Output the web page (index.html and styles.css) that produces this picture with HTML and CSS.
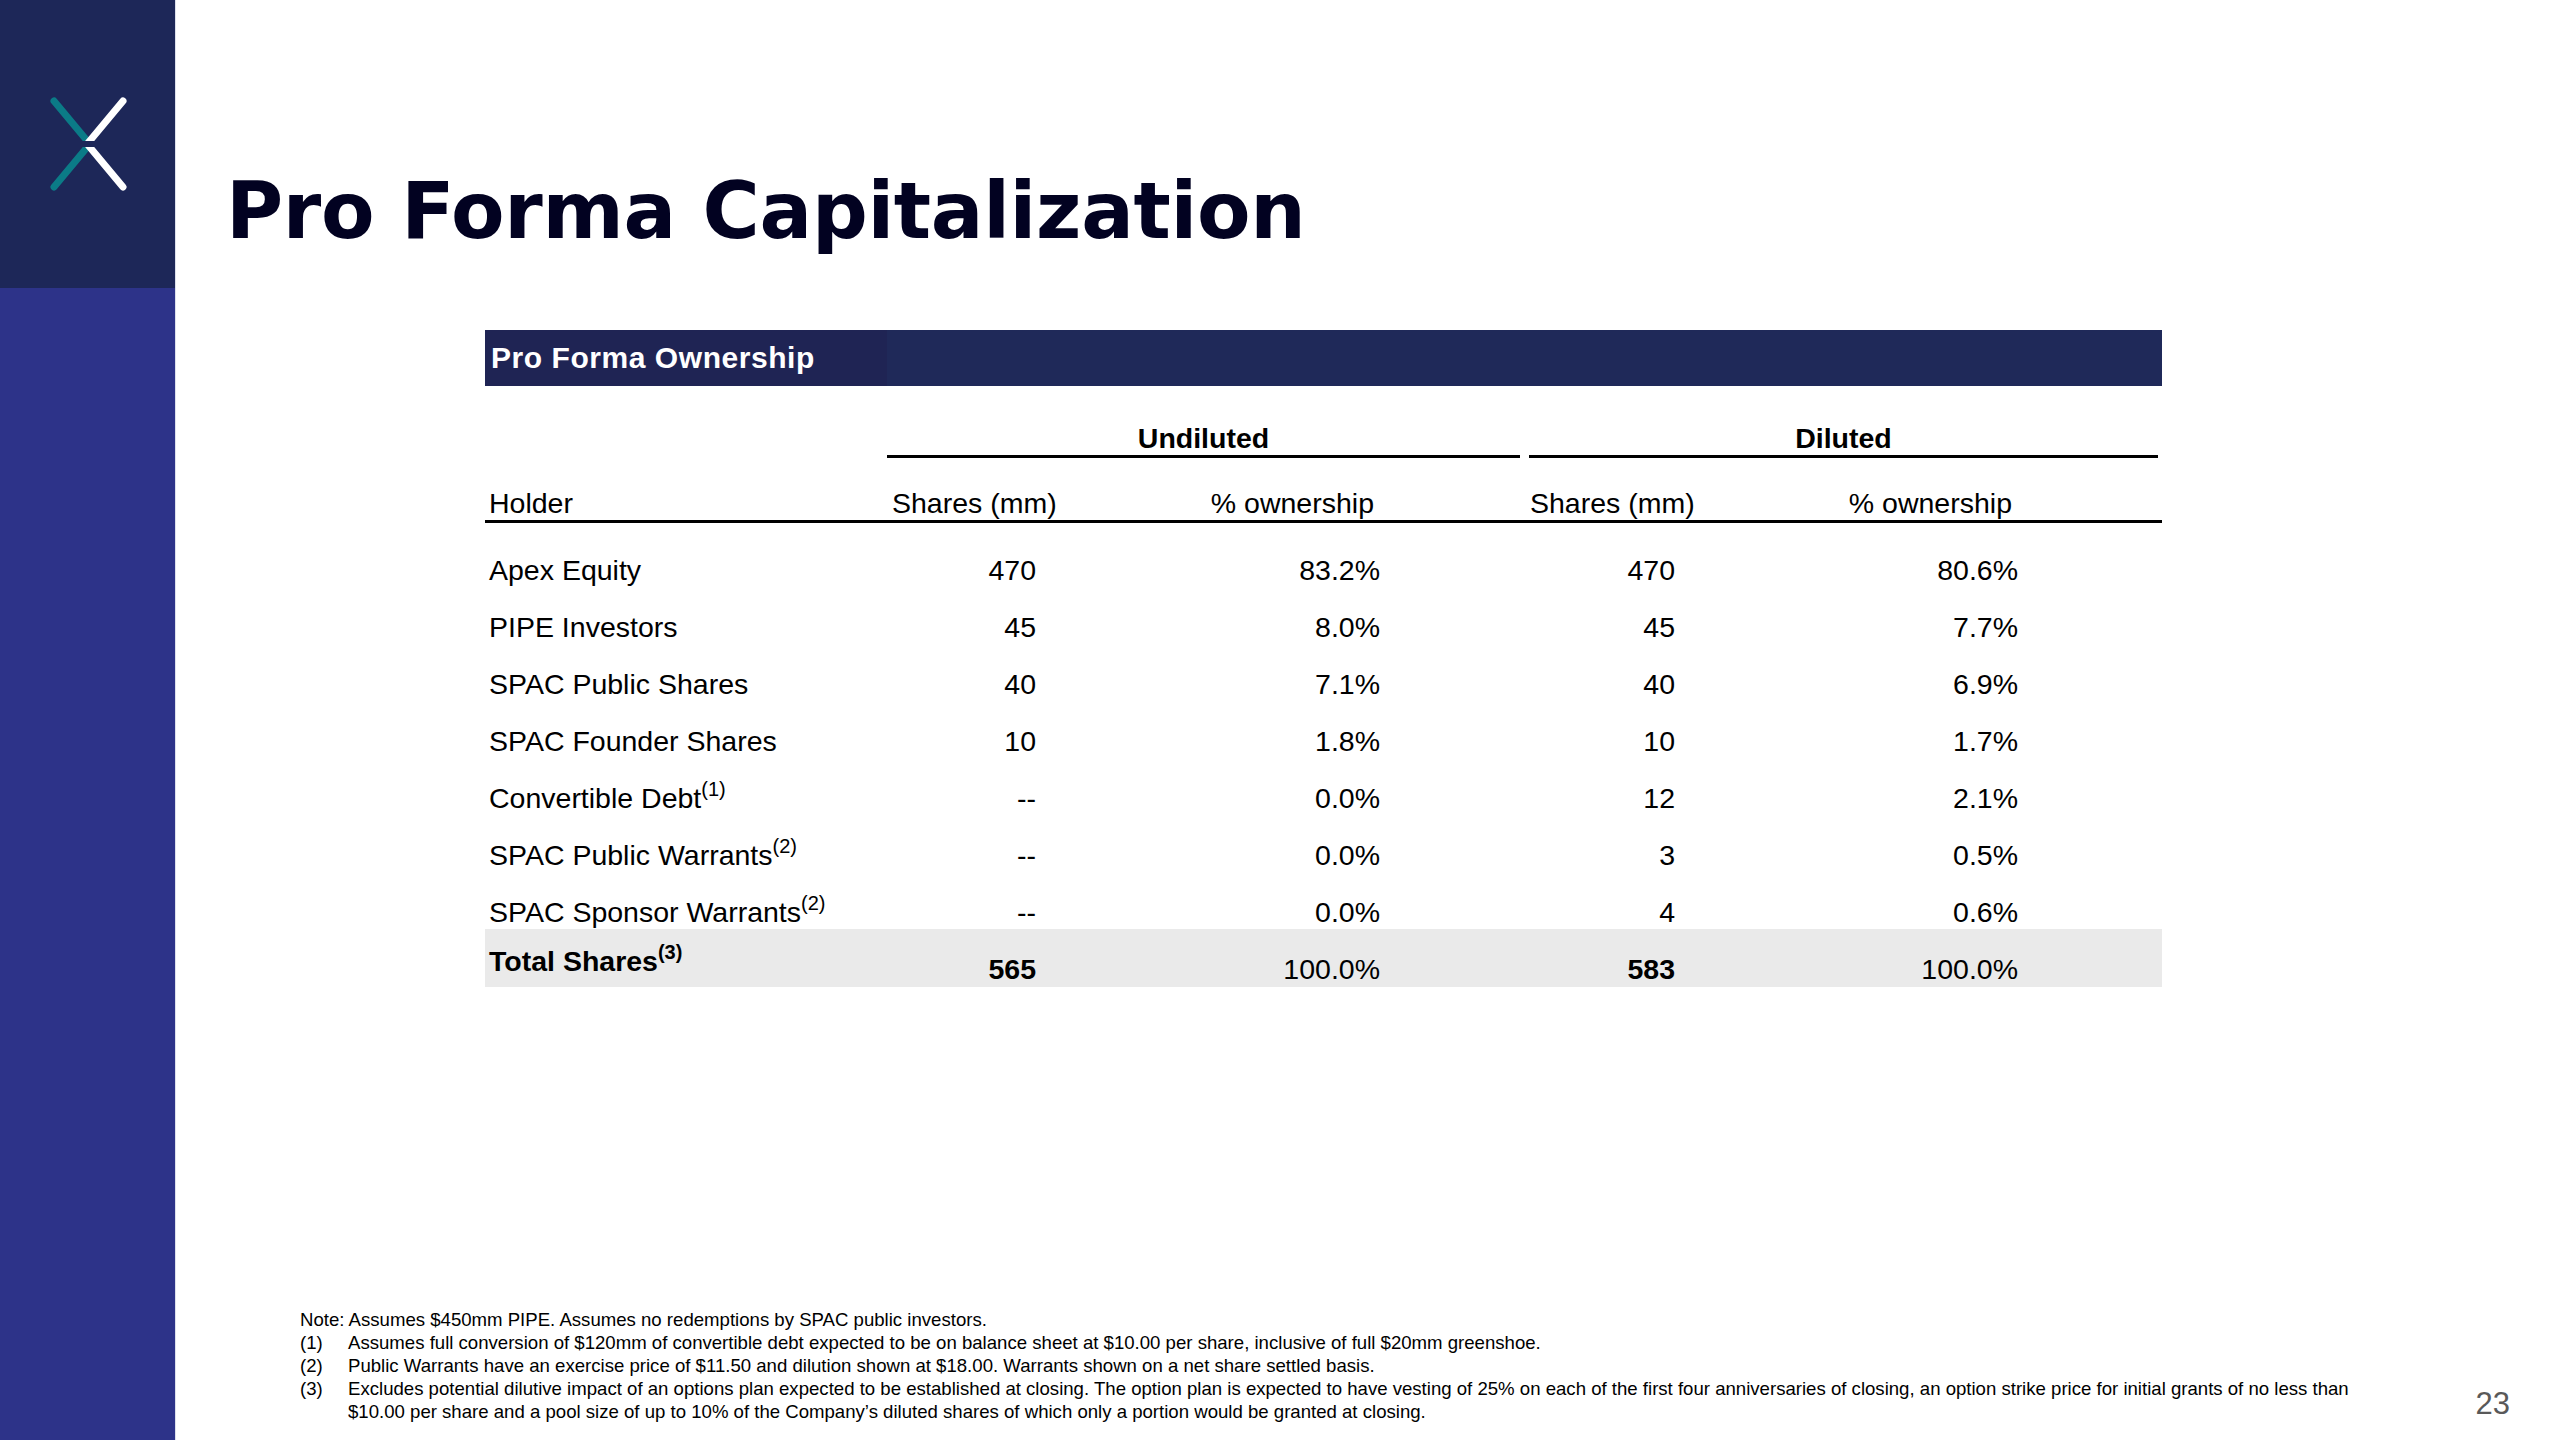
FILE: index.html
```html
<!DOCTYPE html>
<html lang="en">
<head>
<meta charset="utf-8">
<title>Pro Forma Capitalization</title>
<link rel="stylesheet" href="styles.css">
</head>
<body>
<div class="slide">
  <aside class="sidebar">
    <div class="side-top">
      <svg class="logo" viewBox="0 0 175 288" aria-hidden="true">
        <defs>
          <clipPath id="clipUp"><rect x="0" y="0" width="175" height="141"/></clipPath>
          <clipPath id="clipLo"><rect x="0" y="147" width="175" height="141"/></clipPath>
        </defs>
        <g clip-path="url(#clipUp)" stroke-width="7" stroke-linecap="round">
          <line x1="54" y1="101" x2="94" y2="149" stroke="#0b7b87"/>
          <line x1="123" y1="101" x2="83" y2="149" stroke="#ffffff"/>
        </g>
        <g clip-path="url(#clipLo)" stroke-width="7" stroke-linecap="round">
          <line x1="54" y1="187" x2="94" y2="139" stroke="#0b7b87"/>
          <line x1="123" y1="187" x2="83" y2="139" stroke="#ffffff"/>
        </g>
      </svg>
    </div>
    <div class="side-bottom"></div>
  </aside>

  <main class="main">
    <h1 class="title">Pro Forma Capitalization</h1>

    <section class="ownership">
      <div class="bar">Pro Forma Ownership</div>

      <div class="group">
        <div></div>
        <div class="grp">Undiluted</div>
        <div></div>
        <div class="grp grp-d">Diluted</div>
      </div>

      <div class="row head">
        <div class="h-holder">Holder</div>
        <div class="h-shares">Shares (mm)</div>
        <div class="h-pct">% ownership</div>
        <div></div>
        <div class="h-shares-d">Shares (mm)</div>
        <div class="h-pct-d">% ownership</div>
      </div>

      <div class="rows">
        <div class="row data">
          <div class="c-holder">Apex Equity</div>
          <div class="c-us">470</div>
          <div class="c-up">83.2%</div>
          <div></div>
          <div class="c-ds">470</div>
          <div class="c-dp">80.6%</div>
        </div>
        <div class="row data">
          <div class="c-holder">PIPE Investors</div>
          <div class="c-us">45</div>
          <div class="c-up">8.0%</div>
          <div></div>
          <div class="c-ds">45</div>
          <div class="c-dp">7.7%</div>
        </div>
        <div class="row data">
          <div class="c-holder">SPAC Public Shares</div>
          <div class="c-us">40</div>
          <div class="c-up">7.1%</div>
          <div></div>
          <div class="c-ds">40</div>
          <div class="c-dp">6.9%</div>
        </div>
        <div class="row data">
          <div class="c-holder">SPAC Founder Shares</div>
          <div class="c-us">10</div>
          <div class="c-up">1.8%</div>
          <div></div>
          <div class="c-ds">10</div>
          <div class="c-dp">1.7%</div>
        </div>
        <div class="row data">
          <div class="c-holder">Convertible Debt<sup>(1)</sup></div>
          <div class="c-us">--</div>
          <div class="c-up">0.0%</div>
          <div></div>
          <div class="c-ds">12</div>
          <div class="c-dp">2.1%</div>
        </div>
        <div class="row data">
          <div class="c-holder">SPAC Public Warrants<sup>(2)</sup></div>
          <div class="c-us">--</div>
          <div class="c-up">0.0%</div>
          <div></div>
          <div class="c-ds">3</div>
          <div class="c-dp">0.5%</div>
        </div>
        <div class="row data">
          <div class="c-holder">SPAC Sponsor Warrants<sup>(2)</sup></div>
          <div class="c-us">--</div>
          <div class="c-up">0.0%</div>
          <div></div>
          <div class="c-ds">4</div>
          <div class="c-dp">0.6%</div>
        </div>
        <div class="row data total">
          <div class="c-holder t-label">Total Shares<sup>(3)</sup></div>
          <div class="c-us t-bold">565</div>
          <div class="c-up">100.0%</div>
          <div></div>
          <div class="c-ds t-bold">583</div>
          <div class="c-dp">100.0%</div>
        </div>
      </div>
    </section>

    <footer class="foot">
      <div class="notes">
        <div class="note">Note: Assumes $450mm PIPE. Assumes no redemptions by SPAC public investors.</div>
        <div class="note-item"><span>(1)</span><span>Assumes full conversion of $120mm of convertible debt expected to be on balance sheet at $10.00 per share, inclusive of full $20mm greenshoe.</span></div>
        <div class="note-item"><span>(2)</span><span>Public Warrants have an exercise price of $11.50 and dilution shown at $18.00. Warrants shown on a net share settled basis.</span></div>
        <div class="note-item"><span>(3)</span><span>Excludes potential dilutive impact of an options plan expected to be established at closing. The option plan is expected to have vesting of 25% on each of the first four anniversaries of closing, an option strike price for initial grants of no less than<br>$10.00 per share and a pool size of up to 10% of the Company’s diluted shares of which only a portion would be granted at closing.</span></div>
      </div>
      <div class="page">23</div>
    </footer>
  </main>
</div>
</body>
</html>
```

FILE: styles.css
```css
html, body {
  margin: 0;
  padding: 0;
  background: #ffffff;
}

.slide {
  width: 2560px;
  height: 1440px;
  display: flex;
  overflow: hidden;
  background: #ffffff;
  font-family: "Liberation Sans", Arial, sans-serif;
  color: #000000;
}

/* ---------- sidebar ---------- */
.sidebar {
  width: 175px;
  flex: none;
  display: flex;
  flex-direction: column;
  border-right: 1px solid #dde0ec;
}

.side-top {
  height: 288px;
  background: #1d2758;
}

.side-bottom {
  flex: 1;
  background: #2d3389;
}

.logo {
  display: block;
  width: 175px;
  height: 288px;
}

/* ---------- main ---------- */
.main {
  flex: 1;
  display: flex;
  flex-direction: column;
  padding-top: 166px;
}

.title {
  margin: 0 0 0 50px;
  font-family: "DejaVu Sans", "Liberation Sans", sans-serif;
  font-weight: bold;
  font-size: 78px;
  line-height: 90px;
  letter-spacing: -0.3px;
  color: #020221;
}

/* ---------- table ---------- */
.ownership {
  margin: 74px 0 0 309px;
  width: 1677px;
  font-size: 28.5px;
}

.bar {
  height: 56px;
  line-height: 56px;
  padding-left: 6px;
  font-size: 30px;
  font-weight: bold;
  letter-spacing: 0.55px;
  color: #ffffff;
  background: linear-gradient(to right, #1f2454 0, #1f2454 24%, #1f2959 24%, #1f2959 100%);
}

.group {
  display: grid;
  grid-template-columns: 402px 633px 9px 629px;
}

.grp {
  font-weight: bold;
  text-align: center;
  padding-top: 36px;
  line-height: 33px;
  border-bottom: 3px solid #000000;
}

.row {
  display: grid;
  grid-template-columns: 402px 213px 420px 9px 211px 422px;
}

.head {
  border-bottom: 3px solid #000000;
}

.head > div {
  padding-top: 29px;
  line-height: 33px;
  white-space: nowrap;
}

.h-holder { padding-left: 4px; }
.h-shares { padding-left: 5px; }
.h-pct { text-align: right; padding-right: 146px; }
.h-shares-d { padding-left: 1px; }
.h-pct-d { text-align: right; padding-right: 150px; }

.rows {
  margin-top: 7px;
}

.data {
  height: 57px;
}

.data > div {
  padding-top: 23px;
  line-height: 34px;
  white-space: nowrap;
}

.c-holder { padding-left: 4px; }
.c-us { text-align: right; padding-right: 64px; }
.c-up { text-align: right; padding-right: 140px; }
.c-ds { text-align: right; padding-right: 65px; }
.c-dp { text-align: right; padding-right: 144px; }

.total {
  height: 58px;
  background: #eaeaea;
}

.total > .t-label {
  padding-top: 15px;
  font-weight: bold;
}

.t-bold {
  font-weight: bold;
}

sup {
  font-size: 20px;
  line-height: 0;
  vertical-align: 12px;
}

/* ---------- footer ---------- */
.foot {
  margin-top: auto;
  display: flex;
  align-items: flex-end;
  padding: 0 50px 17px 124px;
}

.notes {
  flex: 1;
  font-size: 18.6px;
  line-height: 23px;
  white-space: nowrap;
}

.note-item {
  display: grid;
  grid-template-columns: 48px auto;
}

.page {
  font-size: 31px;
  line-height: 31px;
  color: #595959;
  margin-bottom: 4px;
}
```
